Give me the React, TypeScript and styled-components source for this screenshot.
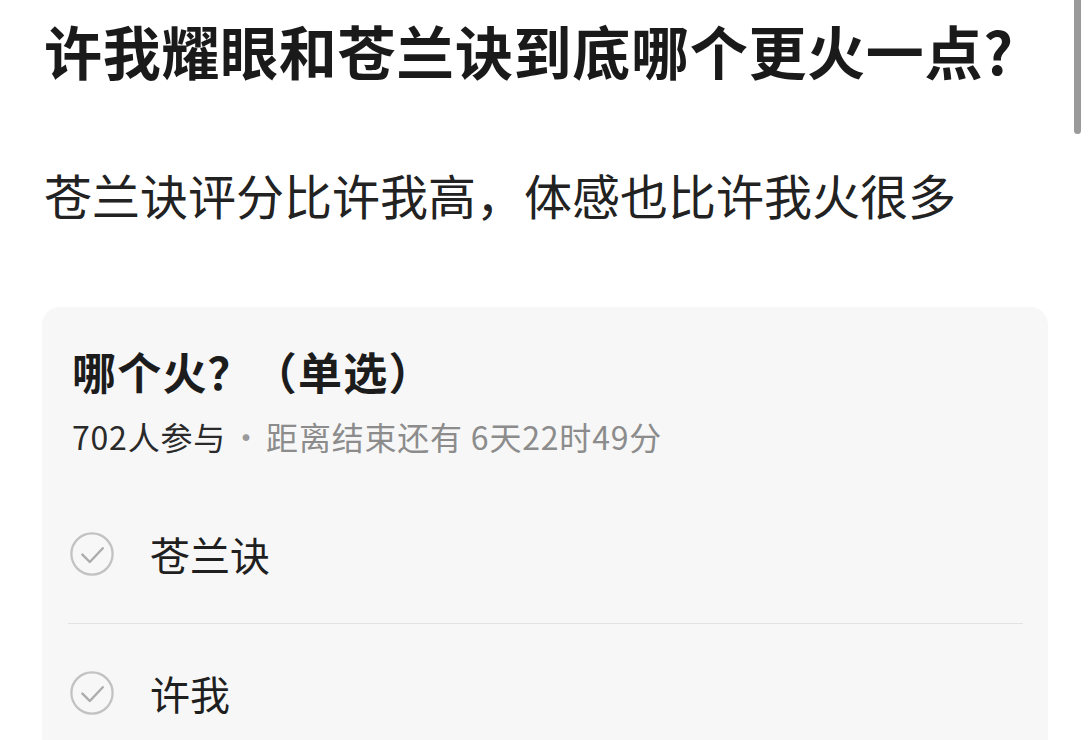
import styled, { createGlobalStyle } from 'styled-components';

const GlobalStyle = createGlobalStyle`
  html, body {
    margin: 0;
    padding: 0;
    background: #ffffff;
  }
  body {
    font-family: "Noto Sans CJK SC", "Noto Sans", sans-serif;
    color: #1c1c1c;
  }
`;

const poll = {
  question: '哪个火？（单选）',
  voters: 702,
  remaining: '距离结束还有 6天22时49分',
  options: ['苍兰诀', '许我'],
};

export default function App() {
  return (
    <>
      <GlobalStyle />
      <Page>
        <Title>许我耀眼和苍兰诀到底哪个更火一点?</Title>
        <Body>苍兰诀评分比许我高，体感也比许我火很多</Body>

        <PollCard>
          <PollTitle>{poll.question}</PollTitle>
          <Meta>
            <Count>{poll.voters}人参与</Count>
            <Separator>·</Separator>
            <Dim>{poll.remaining}</Dim>
          </Meta>

          <Options>
            {poll.options.map((opt) => (
              <Option key={opt}>
                <CheckIcon />
                <OptionLabel>{opt}</OptionLabel>
              </Option>
            ))}
          </Options>
        </PollCard>
      </Page>
      <ScrollThumb />
    </>
  );
}

function CheckIcon() {
  return (
    <IconWrap>
      <svg width="44" height="44" viewBox="0 0 44 44">
        <circle cx="22" cy="22" r="20.6" fill="none" stroke="#c2c2c2" strokeWidth="2.3" />
        <path d="M12.4 22.6 L19.8 30 L32.8 16.2" fill="none" stroke="#acacac" strokeWidth="2.4" strokeLinecap="round" strokeLinejoin="round" />
      </svg>
    </IconWrap>
  );
}

const Page = styled.div`
  padding: 15px 44px 0 42px;
  height: 740px;
  box-sizing: border-box;
  overflow: hidden;
`;

const Title = styled.h1`
  margin: 0 0 0 2px;
  font-size: 58px;
  line-height: 70px;
  font-weight: 700;
  letter-spacing: 0.7px;
  color: #1a1a1a;
  white-space: nowrap;
`;

const Body = styled.p`
  margin: 81px 0 0 2px;
  font-size: 48px;
  line-height: 56px;
  color: #222;
  white-space: nowrap;
`;

const PollCard = styled.section`
  margin-top: 85px;
  background: #f7f7f7;
  border-radius: 18px;
  padding: 38px 25px 40px 26px;
  min-height: 600px;
`;

const PollTitle = styled.h2`
  margin: 0 0 0 4px;
  font-size: 44px;
  line-height: 52px;
  font-weight: 700;
  letter-spacing: 1.2px;
  color: #1c1c1c;
`;

const Meta = styled.div`
  margin: 19px 0 0 4px;
  font-size: 32px;
  line-height: 40px;
  letter-spacing: 0.8px;
  white-space: nowrap;
`;

const Count = styled.span`
  color: #2a2a2a;
`;

const Separator = styled.span`
  display: inline-block;
  width: 40px;
  text-align: center;
  letter-spacing: 0;
  color: #9a9a9a;
`;

const Dim = styled.span`
  color: #8c8c8c;
`;

const Options = styled.div`
  margin-top: 29px;
  display: flex;
  flex-direction: column;
`;

const Option = styled.div`
  height: 138px;
  display: flex;
  align-items: center;
  gap: 36px;
  padding-left: 2px;
  & + & {
    border-top: 1.5px solid #e2e2e2;
  }
`;

const IconWrap = styled.span`
  display: flex;
  width: 44px;
  height: 44px;
`;

const OptionLabel = styled.span`
  font-size: 40px;
  line-height: 48px;
  color: #1f1f1f;
`;

const ScrollThumb = styled.div`
  position: fixed;
  top: 0;
  right: 11px;
  width: 7px;
  height: 134px;
  border-radius: 0 0 4px 4px;
  background: #9a9a9a;
`;
